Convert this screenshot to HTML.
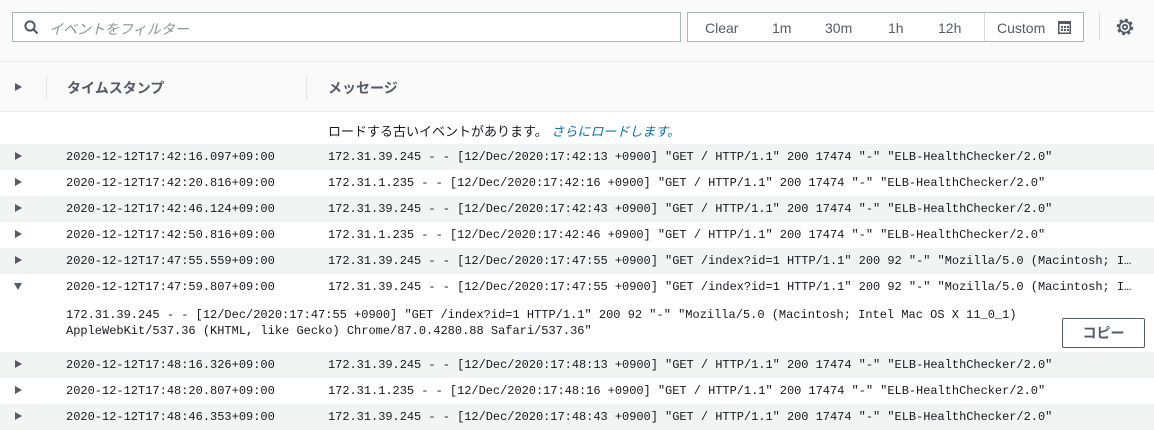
<!DOCTYPE html>
<html><head><meta charset="utf-8"><style>
*{box-sizing:border-box;margin:0;padding:0}
body{width:1154px;height:420px;overflow:hidden;background:#fff;font-family:"Liberation Sans","Noto Sans CJK JP",sans-serif;color:#16191f;position:relative}
.top{position:absolute;left:0;top:0;width:1154px;height:112px;background:#fafafa;border-bottom:1px solid #eaeded}
.hline{position:absolute;left:0;top:61px;width:1154px;height:1px;background:#eaeded}
.search{position:absolute;left:12px;top:12px;width:669px;height:30px;border:1px solid #aab7b8;background:#fff}
.search span{position:absolute;left:36px;top:6px;font-size:14px;color:#879596;font-style:italic}
.btns{position:absolute;left:687px;top:12px;width:397px;height:30px;border:1px solid #aab7b8;background:#fff;font-size:14px;color:#545b64}
.btns span{position:absolute;top:7px}
.vd{position:absolute;width:1px;background:#d5dbdb}
.mono{font-family:"Liberation Mono","DejaVu Sans Mono",monospace;font-size:12px;color:#16191f}
.row{position:absolute;left:0;width:1154px;height:26px}
.row.g{background:#f2f3f3}
.row .tri{position:absolute;left:15px;top:8px;width:0;height:0;border-left:7px solid #545b64;border-top:4.5px solid transparent;border-bottom:4.5px solid transparent}
.row .ts{position:absolute;left:66px;top:6px}
.row .msg{position:absolute;left:328px;top:6px;white-space:pre;letter-spacing:-0.03px}
.hd{position:absolute;top:78px;font-size:14px;font-weight:bold;color:#545b64}
</style></head><body>
<div class="top"><div class="hline"></div></div>
<div class="search">
<svg style="position:absolute;left:11px;top:7px" width="15" height="15" viewBox="0 0 15 15"><circle cx="6" cy="6" r="4.6" fill="none" stroke="#545b64" stroke-width="2"/><path d="M9.5 9.5L13.5 13.5" stroke="#545b64" stroke-width="2.2"/></svg>
<span>イベントをフィルター</span></div>
<div class="btns">
<span style="left:17px">Clear</span><span style="left:84px">1m</span><span style="left:137px">30m</span><span style="left:200px">1h</span><span style="left:250px">12h</span>
<div class="vd" style="left:296px;top:0;height:28px"></div>
<span style="left:309px">Custom</span>
<svg style="position:absolute;left:370px;top:8px" width="13" height="13" viewBox="0 0 13 13"><rect x="0.75" y="0.75" width="11.5" height="11.5" fill="none" stroke="#545b64" stroke-width="1.5"/><rect x="0" y="0" width="13" height="3" fill="#545b64"/><g fill="#545b64"><rect x="3" y="5" width="2" height="2"/><rect x="6" y="5" width="2" height="2"/><rect x="9" y="5" width="2" height="2"/><rect x="3" y="8" width="2" height="2"/><rect x="6" y="8" width="2" height="2"/><rect x="9" y="8" width="2" height="2"/></g></svg>
</div>
<div class="vd" style="left:1099px;top:13px;height:28px"></div>
<svg style="position:absolute;left:1116px;top:18px" width="18" height="18" viewBox="0 0 18 18"><circle cx="9" cy="9" r="6.8" fill="none" stroke="#545b64" stroke-width="3" stroke-dasharray="2.8 2.5"/><circle cx="9" cy="9" r="5.6" fill="none" stroke="#545b64" stroke-width="1.8"/><circle cx="9" cy="9" r="2.2" fill="none" stroke="#545b64" stroke-width="1.8"/></svg>
<div style="position:absolute;left:15px;top:83px;width:0;height:0;border-left:7px solid #545b64;border-top:4.5px solid transparent;border-bottom:4.5px solid transparent"></div>
<div class="vd" style="left:46px;top:75px;height:25px;background:#e2e6e6"></div>
<div class="hd" style="left:67px">タイムスタンプ</div>
<div class="vd" style="left:306px;top:75px;height:25px;background:#e2e6e6"></div>
<div class="hd" style="left:328px">メッセージ</div>
<div style="position:absolute;left:328px;top:121px;font-size:13px">ロードする古いイベントがあります。 <span style="color:#0073bb;font-style:italic">さらにロードします。</span></div>

<div class="row g mono" style="top:144px"><div class="tri"></div><div class="ts">2020-12-12T17:42:16.097+09:00</div><div class="msg">172.31.39.245 - - [12/Dec/2020:17:42:13 +0900] "GET / HTTP/1.1" 200 17474 "-" "ELB-HealthChecker/2.0"</div></div>
<div class="row mono" style="top:170px"><div class="tri"></div><div class="ts">2020-12-12T17:42:20.816+09:00</div><div class="msg">172.31.1.235 - - [12/Dec/2020:17:42:16 +0900] "GET / HTTP/1.1" 200 17474 "-" "ELB-HealthChecker/2.0"</div></div>
<div class="row g mono" style="top:196px"><div class="tri"></div><div class="ts">2020-12-12T17:42:46.124+09:00</div><div class="msg">172.31.39.245 - - [12/Dec/2020:17:42:43 +0900] "GET / HTTP/1.1" 200 17474 "-" "ELB-HealthChecker/2.0"</div></div>
<div class="row mono" style="top:222px"><div class="tri"></div><div class="ts">2020-12-12T17:42:50.816+09:00</div><div class="msg">172.31.1.235 - - [12/Dec/2020:17:42:46 +0900] "GET / HTTP/1.1" 200 17474 "-" "ELB-HealthChecker/2.0"</div></div>
<div class="row g mono" style="top:248px"><div class="tri"></div><div class="ts">2020-12-12T17:47:55.559+09:00</div><div class="msg">172.31.39.245 - - [12/Dec/2020:17:47:55 +0900] "GET /index?id=1 HTTP/1.1" 200 92 "-" "Mozilla/5.0 (Macintosh; I…</div></div>
<div class="row mono" style="top:274px"><div style="position:absolute;left:14px;top:9px;width:0;height:0;border-top:7px solid #545b64;border-left:4.5px solid transparent;border-right:4.5px solid transparent"></div><div class="ts">2020-12-12T17:47:59.807+09:00</div><div class="msg">172.31.39.245 - - [12/Dec/2020:17:47:55 +0900] "GET /index?id=1 HTTP/1.1" 200 92 "-" "Mozilla/5.0 (Macintosh; I…</div></div>
<div class="mono" style="position:absolute;left:66px;top:307px;line-height:16px;white-space:pre">172.31.39.245 - - [12/Dec/2020:17:47:55 +0900] "GET /index?id=1 HTTP/1.1" 200 92 "-" "Mozilla/5.0 (Macintosh; Intel Mac OS X 11_0_1)
AppleWebKit/537.36 (KHTML, like Gecko) Chrome/87.0.4280.88 Safari/537.36"</div>
<div style="position:absolute;left:1062px;top:318px;width:83px;height:30px;border:1px solid #545b64;border-radius:2px;background:#fff;font-size:14px;font-weight:bold;color:#545b64;text-align:center;line-height:28px">コピー</div>
<div class="row g mono" style="top:352px"><div class="tri"></div><div class="ts">2020-12-12T17:48:16.326+09:00</div><div class="msg">172.31.39.245 - - [12/Dec/2020:17:48:13 +0900] "GET / HTTP/1.1" 200 17474 "-" "ELB-HealthChecker/2.0"</div></div>
<div class="row mono" style="top:378px"><div class="tri"></div><div class="ts">2020-12-12T17:48:20.807+09:00</div><div class="msg">172.31.1.235 - - [12/Dec/2020:17:48:16 +0900] "GET / HTTP/1.1" 200 17474 "-" "ELB-HealthChecker/2.0"</div></div>
<div class="row g mono" style="top:404px"><div class="tri"></div><div class="ts">2020-12-12T17:48:46.353+09:00</div><div class="msg">172.31.39.245 - - [12/Dec/2020:17:48:43 +0900] "GET / HTTP/1.1" 200 17474 "-" "ELB-HealthChecker/2.0"</div></div>
</body></html>
